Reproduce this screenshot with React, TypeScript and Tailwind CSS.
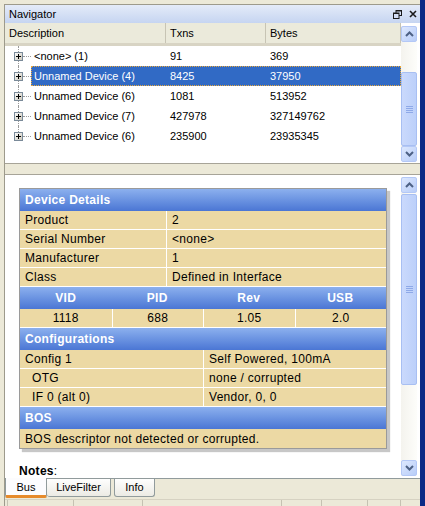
import React from "react";

type Row = { name: string; txns: string; bytes: string; selected?: boolean };

const rows: Row[] = [
  { name: "<none> (1)", txns: "91", bytes: "369" },
  { name: "Unnamed Device (4)", txns: "8425", bytes: "37950", selected: true },
  { name: "Unnamed Device (6)", txns: "1081", bytes: "513952" },
  { name: "Unnamed Device (7)", txns: "427978", bytes: "327149762" },
  { name: "Unnamed Device (6)", txns: "235900", bytes: "23935345" },
];

const PlusBox = () => (
  <svg width="9" height="9" viewBox="0 0 9 9" className="shrink-0">
    <defs>
      <linearGradient id="pb" x1="0" y1="0" x2="1" y2="1">
        <stop offset="0" stopColor="#ffffff" />
        <stop offset="1" stopColor="#c8c4b6" />
      </linearGradient>
    </defs>
    <rect x="0.5" y="0.5" width="8" height="8" fill="url(#pb)" stroke="#7a8a99" />
    <path d="M2 4.5h5M4.5 2v5" stroke="#000" strokeWidth="1" />
  </svg>
);

const Chevron = ({ up }: { up?: boolean }) => (
  <svg width="9" height="6" viewBox="0 0 9 6">
    <path
      d={up ? "M1 5 L4.5 1.5 L8 5" : "M1 1 L4.5 4.5 L8 1"}
      fill="none"
      stroke="#4d6185"
      strokeWidth="2"
    />
  </svg>
);

const ScrollBtn = ({ up }: { up?: boolean }) => (
  <div className="h-[16px] w-[16px] shrink-0 rounded-[2px] border border-[#b4c8f6] bg-gradient-to-br from-[#dde8fe] to-[#b8cdf8] flex items-center justify-center">
    <Chevron up={up} />
  </div>
);

const ScrollBar = ({ gap, thumb }: { gap: number; thumb: number }) => (
  <div className="w-[16px] h-full flex flex-col bg-gradient-to-r from-[#f4f3ee] to-[#fdfdfa]">
    <ScrollBtn up />
    <div className="shrink-0" style={{ height: gap }} />
    <div
      className="shrink-0 rounded-[2px] border border-[#a8bff2] bg-gradient-to-r from-[#cad9fc] to-[#bcd0fa] flex flex-col items-center justify-center gap-[1px]"
      style={{ height: thumb }}
    >
      <div className="w-[7px] h-[1px] bg-[#8ea9e8]" />
      <div className="w-[7px] h-[1px] bg-[#8ea9e8]" />
      <div className="w-[7px] h-[1px] bg-[#8ea9e8]" />
      <div className="w-[7px] h-[1px] bg-[#8ea9e8]" />
    </div>
    <div className="flex-1" />
    <ScrollBtn />
  </div>
);

const BlueHead = ({ children }: { children: React.ReactNode }) => (
  <div className="h-[22px] flex items-center pl-[5px] bg-gradient-to-b from-[#8cb0ee] to-[#4b76d4] text-white font-bold">
    {children}
  </div>
);

const Pair = ({ a, b, split = 146, indent = false }: { a: string; b: string; split?: number; indent?: boolean }) => (
  <div className="h-[19px] flex border-b border-white bg-[#ecd9a4]">
    <div className={indent ? "pl-[12px] flex items-center" : "pl-[5px] flex items-center"} style={{ width: split }}>
      {a}
    </div>
    <div className="flex-1 border-l border-white pl-[5px] flex items-center">{b}</div>
  </div>
);

export default function App() {
  return (
    <div className="w-[425px] h-[506px] overflow-hidden bg-[#ece9d8] flex font-['Liberation_Sans',Arial,sans-serif] text-[11px] text-black">
      <div className="w-[4px] shrink-0" />
      <div className="flex-1 flex flex-col pt-[4px]">
        <div className="flex-1 flex flex-col border-l border-t border-[#9d9a8c]">
          {/* title */}
          <div className="h-[18px] shrink-0 flex items-center justify-between pl-[4px] pr-[3px] bg-gradient-to-b from-[#e4ebf9] to-[#c6d5f1]">
            <span>Navigator</span>
            <div className="flex items-center gap-[7px]">
              <svg width="9" height="9" viewBox="0 0 9 9">
                <rect x="3" y="0.5" width="5.5" height="5" fill="none" stroke="#1a1a1a" />
                <rect x="0.5" y="3" width="5.5" height="5.5" fill="#d4def5" stroke="#1a1a1a" />
                <path d="M3 1h6M1 3.5h5" stroke="#1a1a1a" strokeWidth="1" />
              </svg>
              <svg width="8" height="8" viewBox="0 0 8 8">
                <path d="M1 1L7 7M7 1L1 7" stroke="#1a1a1a" strokeWidth="1.6" />
              </svg>
            </div>
          </div>

          {/* navigator list */}
          <div className="h-[141px] shrink-0 flex bg-white border-b border-[#a7a498]">
            <div className="flex-1 flex flex-col">
              <div className="h-[23px] shrink-0 flex bg-[#ebeadb] border-b-[3px] border-[#d8d4c4]">
                <div className="w-[161px] pl-[4px] flex items-center border-r border-[#c7c4b4]">Description</div>
                <div className="w-[100px] pl-[4px] flex items-center border-r border-[#c7c4b4]">Txns</div>
                <div className="flex-1 pl-[4px] flex items-center border-r border-[#c7c4b4]">Bytes</div>
              </div>
              {rows.map((r, i) => (
                <div key={i} className="h-[20px] flex">
                  <div className="w-[26px] shrink-0 flex items-center pl-[9px]">
                    <div className="w-[9px] h-full flex flex-col items-center">
                      <div className="flex-1 w-0 border-l border-dotted border-[#9a9a9a]" />
                      <PlusBox />
                      <div
                        className={
                          i === rows.length - 1
                            ? "flex-1 w-0"
                            : "flex-1 w-0 border-l border-dotted border-[#9a9a9a]"
                        }
                      />
                    </div>
                    <div className="w-[8px] h-0 border-t border-dotted border-[#9a9a9a]" />
                  </div>
                  <div
                    className={
                      r.selected
                        ? "flex-1 flex items-center bg-[#316ac5] text-white border border-dotted border-[#e8a83c]"
                        : "flex-1 flex items-center border border-transparent"
                    }
                  >
                    <div className="w-[134px] pl-[2px]">{r.name}</div>
                    <div className="w-[100px] pl-[4px]">{r.txns}</div>
                    <div className="flex-1 pl-[4px]">{r.bytes}</div>
                  </div>
                </div>
              ))}
            </div>
            <div className="py-[3px] pr-[3px]">
              <ScrollBar gap={30} thumb={74} />
            </div>
          </div>

          {/* splitter */}
          <div className="h-[11px] shrink-0 border-b border-[#a7a498]" />

          {/* details panel */}
          <div className="h-[303px] shrink-0 flex bg-white">
            <div className="flex-1 pl-[14px] pt-[13px] flex flex-col">
              <div className="w-[368px] border border-[#9a9a9a] shadow-[3px_3px_1px_rgba(0,0,0,0.22)] text-[12px] tracking-[0.3px]">
                <BlueHead>Device Details</BlueHead>
                <Pair a="Product" b="2" />
                <Pair a="Serial Number" b="<none>" />
                <Pair a="Manufacturer" b="1" />
                <Pair a="Class" b="Defined in Interface" />
                <div className="h-[22px] grid grid-cols-4 bg-gradient-to-b from-[#8cb0ee] to-[#4b76d4] text-white font-bold">
                  {["VID", "PID", "Rev", "USB"].map((h) => (
                    <div key={h} className="flex items-center justify-center">
                      {h}
                    </div>
                  ))}
                </div>
                <div className="h-[19px] grid grid-cols-4 bg-[#ecd9a4] border-b border-white">
                  {["1118", "688", "1.05", "2.0"].map((v, i) => (
                    <div
                      key={v}
                      className={
                        i === 0
                          ? "flex items-center justify-center"
                          : "flex items-center justify-center border-l border-white"
                      }
                    >
                      {v}
                    </div>
                  ))}
                </div>
                <BlueHead>Configurations</BlueHead>
                <Pair a="Config 1" b="Self Powered, 100mA" split={183} />
                <Pair a="OTG" b="none / corrupted" split={183} indent />
                <Pair a="IF 0 (alt 0)" b="Vendor, 0, 0" split={183} indent />
                <BlueHead>BOS</BlueHead>
                <div className="h-[19px] flex items-center pl-[5px] bg-[#ecd9a4]">
                  BOS descriptor not detected or corrupted.
                </div>
              </div>
              <div className="mt-[13px] text-[12px] tracking-[0.3px]">
                <span className="font-bold">Notes</span>:
              </div>
            </div>
            <div className="py-[2px] pr-[3px]">
              <ScrollBar gap={1} thumb={191} />
            </div>
          </div>

          {/* tabs */}
          <div className="h-[21px] shrink-0 flex items-start border-t border-[#919b9c]">
            <div className="w-[42px] h-[20px] -mt-[1px] pt-[2px] flex items-center justify-center bg-[#fcfcfe] border-l border-r border-[#919b9c] border-b-[3px] border-b-[#e68b2c] rounded-b-[2px]">
              Bus
            </div>
            <div className="w-[64px] h-[18px] flex items-center justify-center bg-gradient-to-b from-[#fefefe] to-[#ecebe4] border-r border-b border-[#919b9c] rounded-b-[3px]">
              LiveFilter
            </div>
            <div className="w-[3px]" />
            <div className="w-[41px] h-[18px] flex items-center justify-center bg-gradient-to-b from-[#fefefe] to-[#ecebe4] border-l border-r border-b border-[#919b9c] rounded-b-[3px]">
              Info
            </div>
          </div>

          {/* status */}
          <div className="h-[7px] shrink-0 flex border-t border-[#d6d2c2]">
            <div className="w-[3px] border-r border-[#c5c2b2]" />
            <div className="w-[66px] border-r border-[#c5c2b2]" />
            <div className="w-[69px] border-r border-[#c5c2b2]" />
            <div className="w-[139px] border-r border-[#c5c2b2]" />
            <div className="w-[40px] border-r border-[#c5c2b2]" />
            <div className="w-[46px] border-r border-[#c5c2b2]" />
            <div className="w-[33px] border-r border-[#c5c2b2]" />
          </div>
        </div>
      </div>
      <div className="w-[5px] shrink-0 bg-[#0b2a86]" />
    </div>
  );
}
